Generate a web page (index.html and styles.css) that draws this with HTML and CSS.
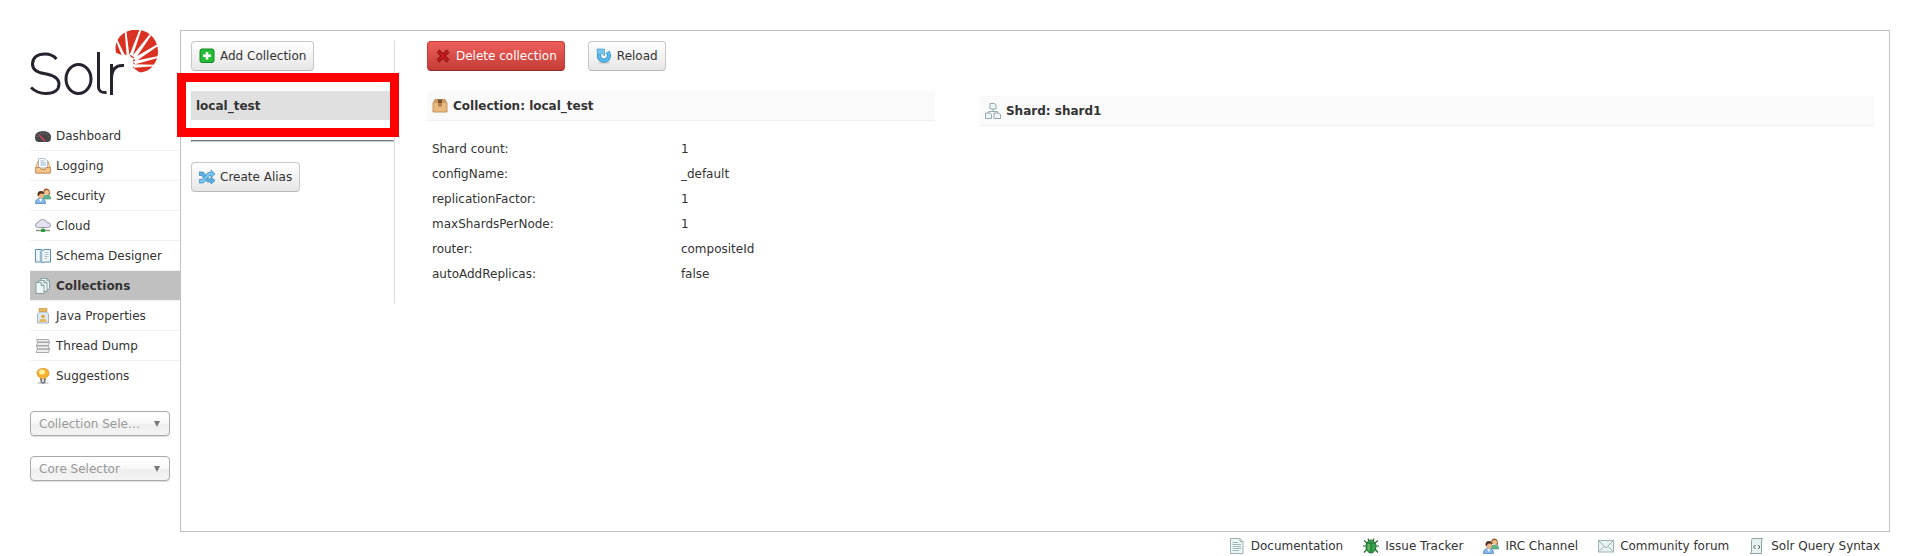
FILE: index.html
```html
<!DOCTYPE html>
<html lang="en">
<head>
<meta charset="utf-8">
<title>Solr Admin</title>
<link rel="stylesheet" href="styles.css">
</head>
<body>
<svg class="defs" aria-hidden="true">
  <symbol id="users" viewBox="0 0 16 16">
    <path d="M8 10Q8 7 12 7Q16 7 15.600 11H9Z" fill="#62b58c" stroke="#3e9068" stroke-width=".6"/>
    <path d="M8.500 6Q7.500 .5 11.500 .5Q15.500 .5 14.800 7L12 6Z" fill="#9c5427"/>
    <circle cx="11.600" cy="4.300" r="2.400" fill="#f2c090"/>
    <path d="M.5 15.500Q.2 10.500 5.500 10.500Q10.500 10.500 10.500 15.500Z" fill="#86b8e8" stroke="#3f79bb" stroke-width=".7"/>
    <path d="M4 11L5.700 14L7.400 11Z" fill="#fff"/>
    <circle cx="5.800" cy="7.500" r="3" fill="#edb584"/>
    <path d="M2.500 7.500Q2 3 6 3Q9.800 3 9 7.500L8.200 5.500L5 5.800L3.500 8Z" fill="#54311d"/>
  </symbol>
</svg>
<div class="page">
  <div class="shell">
    <aside class="sidebar">
      <a class="logo" href="#" aria-label="Solr">
        <svg viewBox="0 0 130 68" aria-hidden="true">
          <g fill="none" stroke="#27222f" stroke-width="3">
            <path d="M26.500 29C23 25 20 24 15 24C7 24 2.500 28 2.500 34C2.500 40 7 42.500 14 43.500C23 45 29 47.500 29 54C29 60 24 63.500 16 63.500C10 63.500 5 61.500 1 57.500"/>
            <ellipse cx="48.500" cy="49" rx="12.500" ry="14.500"/>
            <path d="M68.500 22V57Q68.500 63 76.500 62.500M81.500 65V49Q81.500 34.500 94 35.500M81.500 34V49"/>
          </g>
          <g transform="translate(70 -6) scale(.3333)">
            <path fill="#d93223" d="M48 86C40 50 66 17 108 17C146 17 174 46 174 82C174 118 148 147 118 145L98 130L102 122L98 112L102 104L92 98L88 90L80 94L72 90L66 94Z"/>
            <path fill="#fff" d="M46 46L50 43L74 92L66 96ZM74 22L79 20L88 92L80 94ZM119 16L124 18L98 96L89 92ZM149 31L153 35L106 104L97 96ZM172 61L174 66L108 112L100 103ZM176 96V101L106 121L98 112ZM166 122L162 127L102 131L98 121Z"/>
          </g>
        </svg>
      </a>
      <nav class="menu">
        <a href="#"><svg viewBox="0 0 16 16"><path d="M0 9.500Q0 3 8 3T16 9.500Q16 14 12 14H4Q0 14 0 9.500Z" fill="#47474b"/><path d="M2 9Q3 5 8 5T14 9" fill="none" stroke="#888" stroke-dasharray="1 1.500"/><path d="M4 7L10 13" stroke="#e34b4b" stroke-width="1.200"/></svg>Dashboard</a>
        <a href="#"><svg viewBox="0 0 16 16"><path d="M1 9L3 3H13L15 9V15H1Z" fill="#f7d8ad" stroke="#d3a36c"/><path d="M3.500 .5H10L12.500 3V10H3.500Z" fill="#f8fbff" stroke="#8fa9bb" stroke-width=".7"/><path d="M5.500 3H9M5.500 5H11M5.500 7H11" stroke="#8ca5b5" stroke-width=".8"/><path d="M.5 9.500H5L6 11.500H10L11 9.500H15.500V15H.5Z" fill="#f2c48e" stroke="#c28143" stroke-width=".8"/></svg>Logging</a>
        <a href="#"><svg><use href="#users"/></svg>Security</a>
        <a href="#"><svg viewBox="0 0 16 16"><path d="M3.500 9.500Q.5 9.500 .5 7Q.5 4.500 3.500 4.500Q4 1.500 7.500 1.500Q11 1.500 12 4.500Q15.500 4.500 15.500 7.200Q15.500 9.500 12.500 9.500Z" fill="#e4e3ee" stroke="#8f8fa5" stroke-width=".9"/><path d="M1 12.500H15M8 9.500V12" stroke="#8a9390" stroke-width="1.300"/><path d="M6 11H10V14H6Z" fill="#27a33a"/></svg>Cloud</a>
        <a href="#"><svg viewBox="0 0 16 16"><path d="M.5 1.500H6Q8 1.500 8 3Q8 1.500 10 1.500H15.500V14H9L8 15L7 14H.5Z" fill="#eff6fa" stroke="#5a8bb5"/><path d="M4.500 2Q7 2 7.500 4V14Q7 13 4.500 13Z" fill="#c3d8e1"/><path d="M6 3V14" stroke="#6d97ac"/><path d="M9.500 4.500H13.500M9.500 6.500H13.500M9.500 8.500H13.500M9.500 10.500H12" stroke="#9fb3bd" stroke-width=".8"/></svg>Schema Designer</a>
        <a href="#" class="active" aria-current="page"><svg viewBox="0 0 16 16"><g fill="#edf7f7" stroke="#73918f" stroke-width=".8"><path d="M6 .5H12L14.500 3V11.500H6Z"/><path d="M3.500 2.500H9L12 5V13.500H3.500Z"/><path d="M1 4.500H6L9 7.500V15.500H1Z"/><path d="M6 4.500V7.500H9M9 2.500V5H12M12 .5V3H14.500" fill="none"/></g></svg>Collections</a>
        <a href="#"><svg viewBox="0 0 16 16"><path d="M4.500 4L2.500 6V15H13.500V6L11.500 4Z" fill="#dce7f2" stroke="#92a6b8" stroke-width=".8"/><path d="M4 .5H12V3.500H4Z" fill="#e9b958" stroke="#bd8b31" stroke-width=".6"/><circle cx="8" cy="8.500" r="1.800" fill="#dda841"/><path d="M4.500 14V12L6 11H10L11.500 12V14Z" fill="#e8ba5c"/></svg>Java Properties</a>
        <a href="#"><svg viewBox="0 0 16 16"><g fill="#eee" stroke="#999" stroke-width=".8"><path d="M1.500 1.500H13.500L14.500 4H2.500ZM2.500 4.500H14.500L13.500 7.500H1.500ZM1.500 8H13.500L14.500 11H2.500ZM2.500 11H14.500L13.500 14.500H1Z"/></g></svg>Thread Dump</a>
        <a href="#"><svg viewBox="0 0 16 16"><ellipse cx="8" cy="15" rx="6" ry="1" fill="#ccc"/><path d="M5.500 10Q2 8 2 5.500Q2 .5 8 .5T14 5.500Q14 8 10.500 10V12H5.500Z" fill="#f7b32d" stroke="#d9881a" stroke-width=".7"/><ellipse cx="7" cy="4" rx="3" ry="2.500" fill="#fff0a8"/><path d="M5.500 10.500H10.500V14L9 15.500H7L5.500 14Z" fill="#6f7277"/><path d="M7 10.500H9V14H7Z" fill="#ddd"/></svg>Suggestions</a>
      </nav>
      <div class="selectors">
        <div class="picker"><select aria-label="Collection Selector"><option>Collection Selector</option></select></div>
        <div class="picker"><select aria-label="Core Selector"><option>Core Selector</option></select></div>
      </div>
    </aside>
    <main class="content">
      <section class="list">
        <button class="btn"><svg viewBox="0 0 16 16"><rect x="1" y="1" width="14" height="13.500" rx="2" fill="#23bd32" stroke="#12842a"/><path d="M8 4V11.500M4 7.800H12" stroke="#fff" stroke-width="2.600"/></svg>Add Collection</button>
        <div class="entry-wrap">
          <a class="entry" href="#">local_test</a>
          <span class="highlight"></span>
        </div>
        <hr>
        <button class="btn"><svg viewBox="0 0 16 16"><path d="M0 3H4L10 10H12V8L16 11.500L12 15V13H8.500L2.500 6.500H0Z" fill="#5eaee4" stroke="#2477b5" stroke-width=".6"/><path d="M0 10.500H3L9 3.500H12V1L16 5L12 8.500V6.500H10.500L4.500 14H0Z" fill="#77c3f1" stroke="#2477b5" stroke-width=".6"/></svg>Create Alias</button>
      </section>
      <section class="details">
        <div class="actions">
          <button class="btn danger"><svg viewBox="0 0 16 16"><path d="M3 3L13 13M13 3L3 13" stroke="#7e1111" stroke-width="4"/><path d="M3.500 3.500L12.500 12.500M12.500 3.500L3.500 12.500" stroke="#cf1a1a" stroke-width="2.400"/></svg>Delete collection</button>
          <button class="btn"><svg viewBox="0 0 16 16"><ellipse cx="8" cy="14.800" rx="6" ry="1" fill="#ccc"/><path d="M3.500 6Q2 9 4.500 11.300Q8 14 11.500 11.300Q14.500 8 11.500 4" fill="none" stroke="#2387c4" stroke-width="4"/><path d="M3.500 6Q2 9 4.500 11.300Q8 14 11.500 11.300Q14.500 8 11.500 4" fill="none" stroke="#56b9ef" stroke-width="2.800"/><path d="M1 1H8.500V8L6 5.500L3 7L1 5Z" fill="#74c4ec" stroke="#3c92c6" stroke-width=".6"/></svg>Reload</button>
        </div>
        <h2><svg viewBox="0 0 16 16"><path d="M1 5L3 1.500H13L15 5V14H1Z" fill="#e9b982" stroke="#b87d43" stroke-width=".8"/><path d="M1 5L3 1.500H13L15 5Z" fill="#cf9c66"/><path d="M6 1.500H10V5H6Z" fill="#7a5230"/><path d="M6 5H10V9L9 8L8 9.500L7 8L6 9Z" fill="#b08050"/></svg>Collection: local_test</h2>
        <table>
          <tr><th scope="row">Shard count:</th><td>1</td></tr>
          <tr><th scope="row">configName:</th><td>_default</td></tr>
          <tr><th scope="row">replicationFactor:</th><td>1</td></tr>
          <tr><th scope="row">maxShardsPerNode:</th><td>1</td></tr>
          <tr><th scope="row">router:</th><td>compositeId</td></tr>
          <tr><th scope="row">autoAddReplicas:</th><td>false</td></tr>
        </table>
      </section>
      <section class="shards">
        <h2><svg viewBox="0 0 16 16"><g fill="#edf6f6" stroke="#8aa2a2" stroke-width=".9"><path d="M8 6V8.500M3.500 10.500V8.500H12.500V10.500" fill="none"/><path d="M5 .5H9.500L11 2V6H5ZM.5 10H5L6.500 11.500V15.500H.5ZM9 10H13.500L15.500 11.500V15.500H9Z"/></g></svg>Shard: shard1</h2>
      </section>
    </main>
  </div>
  <footer class="links">
    <a href="#"><svg viewBox="0 0 16 16"><path d="M1.500 .5H11L14 3.500V15.500H1.500Z" fill="#eaf5f5" stroke="#9db2b2"/><path d="M11 .5V3.500H14M3.500 4.500H9M3.500 6.500H12M3.500 8.500H12M3.500 10.500H12M3.500 12.500H10" fill="none" stroke="#8ea6a5" stroke-width=".8"/></svg>Documentation</a>
    <a href="#"><svg viewBox="0 0 16 16"><path d="M4 5L1 2.500M3 8H0M4 11L1 14.500M12 5L15 2.500M13 8H16M12 11L15 14.500M6 3L5 .5M10 3L11 .5" stroke="#286b38" stroke-width="1.200"/><ellipse cx="8" cy="8.500" rx="5" ry="6.500" fill="#39a24d" stroke="#236d35"/><path d="M8 5V15M4 5H12" stroke="#22723a"/><path d="M6 6V12" stroke="#84cf79"/></svg>Issue Tracker</a>
    <a href="#"><svg><use href="#users"/></svg>IRC Channel</a>
    <a href="#"><svg viewBox="0 0 16 16"><rect x=".5" y="2.500" width="15" height="11.500" fill="#e7f1f1" stroke="#a1b5b5"/><path d="M1 3L8 10L15 3M1 13.500L6 8.500M15 13.500L10 8.500" fill="none" stroke="#9db2b2"/></svg>Community forum</a>
    <a href="#"><svg viewBox="0 0 16 16"><path d="M4 .5H14Q12.500 1 12.500 3V15.500H1Q2.500 15 2.500 13V2.500Q2.500 .5 4 .5Z" fill="#e7f1f1" stroke="#8ea5a5"/><path d="M6.500 7L4.500 9L6.500 11M9 7L11 9L9 11" fill="none" stroke="#555"/></svg>Solr Query Syntax</a>
  </footer>
</div>
</body>
</html>
```
FILE: styles.css
```css
* { box-sizing: border-box; }

body {
  margin: 0;
  background: #fff;
  color: #333;
  font: 12px/16px "DejaVu Sans", Verdana, sans-serif;
}

a { color: inherit; text-decoration: none; }

svg { display: block; flex: none; width: 16px; height: 16px; }

.defs { position: absolute; width: 0; height: 0; }

.page { padding: 30px 30px 0; }

.shell { display: flex; min-height: 502px; }

.sidebar { flex: none; width: 150px; }

.logo { display: block; }
.logo svg { width: 130px; height: 68px; }

.menu { margin-top: 23px; }
.menu a {
  display: flex;
  align-items: center;
  gap: 5px;
  height: 30px;
  padding-left: 5px;
  border-bottom: 1px solid #f0f0f0;
  white-space: nowrap;
}
.menu a:last-child { border-bottom: 0; }
.menu .active { background: #c0c0c0; font-weight: bold; }

.selectors {
  display: grid;
  gap: 20px;
  margin: 20px 10px 0 0;
}
.picker { position: relative; }
.picker::after {
  content: "";
  position: absolute;
  top: 10px;
  right: 10px;
  border: solid transparent;
  border-width: 6px 3px 0;
  border-top-color: #777;
  pointer-events: none;
}
.picker select {
  appearance: none;
  display: block;
  width: 100%;
  height: 25px;
  padding: 0 28px 0 8px;
  border: 1px solid #aaa;
  border-radius: 4px;
  background: linear-gradient(#fff 20%, #f6f6f6 50%, #eee 52%, #f4f4f4);
  box-shadow: 0 1px 1px #ddd;
  color: #999;
  font: inherit;
  text-overflow: ellipsis;
}

.content {
  display: flex;
  flex: 1;
  align-items: flex-start;
  padding: 10px 15px 10px 10px;
  border: 1px solid #c0c0c0;
}

.list {
  flex: none;
  width: 204px;
  min-height: 262px;
  border-right: 1px solid #ddd;
}

.btn {
  display: inline-flex;
  align-items: center;
  gap: 5px;
  height: 30px;
  padding: 0 7px;
  border: 1px solid #c8c8c8;
  border-bottom-color: #b8b8b8;
  border-radius: 4px;
  background: linear-gradient(#fff, #e6e6e6);
  color: #333;
  font: inherit;
  white-space: nowrap;
}
.danger {
  border-color: #c43c35;
  border-bottom-color: #882a25;
  background: linear-gradient(#ee5f5b, #c43c35);
  color: #fff;
}

.entry-wrap { position: relative; margin-top: 20px; }
.entry {
  display: block;
  padding: 7px 5px 6px;
  background: #e0e0e0;
  font-weight: bold;
}
.highlight {
  position: absolute;
  inset: -18px -5px -17px -14px;
  border: 9px solid #f00;
}

hr {
  margin: 20px 0;
  border: 1px inset #ccc;
}

.details { flex: 25 1 0; margin-left: 32px; }
.actions { display: flex; gap: 23px; }

h2 {
  display: flex;
  align-items: center;
  gap: 5px;
  height: 30px;
  margin: 20px 0 0;
  padding-left: 5px;
  border-bottom: 1px solid #f0f0f0;
  background: #fafafa;
  font-size: 12px;
}

table { width: 100%; margin-top: 15px; border-spacing: 0; }
th, td { height: 25px; padding: 0 5px; font-weight: normal; text-align: left; }
th { width: 49%; }

.shards { flex: 44 1 0; margin-left: 45px; padding-top: 35px; }

.links {
  display: flex;
  justify-content: flex-end;
  gap: 20px;
  padding: 6px 10px 0 0;
}
.links a { display: flex; gap: 6px; align-items: center; }
```
